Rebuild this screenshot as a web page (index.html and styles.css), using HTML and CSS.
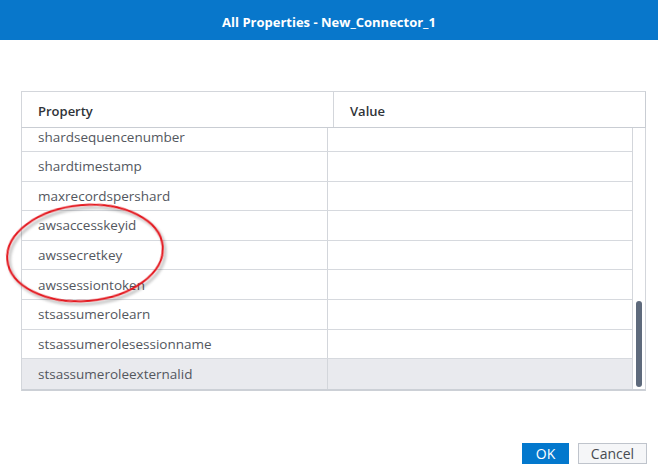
FILE: index.html
```html
<!DOCTYPE html>
<html>
<head>
<meta charset="utf-8">
<link rel="stylesheet" href="styles.css">
</head>
<body>
<div class="dialog">
  <div class="titlebar">All Properties - New_Connector_1</div>
  <div class="content">
    <div class="grid">
      <div class="grid-head">
        <div class="hcell hname">Property</div>
        <div class="hcell hvalue">Value</div>
      </div>
      <div class="grid-body">
        <div class="rows-viewport">
          <div class="rows">
            <div class="row"><div class="cell name">shardsequencenumber</div><div class="cell value"></div></div>
            <div class="row"><div class="cell name">shardtimestamp</div><div class="cell value"></div></div>
            <div class="row"><div class="cell name">maxrecordspershard</div><div class="cell value"></div></div>
            <div class="row"><div class="cell name">awsaccesskeyid</div><div class="cell value"></div></div>
            <div class="row"><div class="cell name">awssecretkey</div><div class="cell value"></div></div>
            <div class="row"><div class="cell name">awssessiontoken</div><div class="cell value"></div></div>
            <div class="row"><div class="cell name">stsassumerolearn</div><div class="cell value"></div></div>
            <div class="row"><div class="cell name">stsassumerolesessionname</div><div class="cell value"></div></div>
            <div class="row selected"><div class="cell name">stsassumeroleexternalid</div><div class="cell value"></div></div>
          </div>
        </div>
        <div class="scrolltrack"><div class="thumb"></div></div>
      </div>
    </div>
    <div class="footer">
      <button class="btn btn-primary">OK</button>
      <button class="btn btn-secondary">Cancel</button>
    </div>
  </div>
  <svg class="annotation" width="185" height="115" viewBox="0 0 185 115">
    <defs>
      <filter id="sh" x="-20%" y="-20%" width="140%" height="140%">
        <feGaussianBlur in="SourceAlpha" stdDeviation="1.5"/>
        <feOffset dx="2" dy="3" result="b"/>
        <feComponentTransfer><feFuncA type="linear" slope="0.35"/></feComponentTransfer>
        <feMerge><feMergeNode/><feMergeNode in="SourceGraphic"/></feMerge>
      </filter>
    </defs>
    <ellipse cx="85" cy="55" rx="78" ry="48" transform="rotate(-5 85 55)" fill="none" stroke="#e3161e" stroke-width="2" filter="url(#sh)"/>
  </svg>
</div>
</body>
</html>
```
FILE: styles.css
```css
html, body {
  margin: 0;
  padding: 0;
  background: #ffffff;
}

body {
  font-family: "Open Sans", "Liberation Sans", sans-serif;
  width: 658px;
  height: 471px;
  overflow: hidden;
}

.dialog {
  position: relative;
  width: 658px;
  height: 471px;
}

.titlebar {
  height: 40px;
  background: #0877cb;
  color: #ffffff;
  font-weight: 700;
  font-size: 13px;
  display: flex;
  align-items: center;
  justify-content: center;
  padding-top: 4px;
  box-sizing: border-box;
}

.content {
  padding: 51px 12px 0 21px;
}

.grid {
  width: 625px;
}

.grid-head {
  display: flex;
  height: 37px;
  box-sizing: border-box;
  border: 1px solid #d3d6db;
  border-right-color: #c9cdd3;
  border-bottom-color: #c9cdd3;
}

.hcell {
  display: flex;
  align-items: center;
  padding-left: 16px;
  padding-top: 3px;
  box-sizing: border-box;
  font-size: 13px;
  font-weight: 600;
  color: #2f3338;
}

.hname {
  width: 312px;
  border-right: 1px solid #d3d6db;
}

.hvalue {
  flex: 1;
}

.grid-body {
  display: flex;
  height: 263px;
  box-sizing: border-box;
  border-left: 1px solid #d3d6db;
  border-right: 1px solid #d3d6db;
  border-bottom: 2px solid #ccd0d6;
}

.rows-viewport {
  width: 611px;
  overflow: hidden;
  border-right: 1px solid #d3d6db;
  box-sizing: border-box;
}

.rows {
  margin-top: -5.6px;
}

.row {
  display: flex;
  height: 29.6px;
  box-sizing: border-box;
  border-bottom: 1px solid #d6d9de;
}

.row.selected {
  background: #e9eaee;
  border-bottom: none;
}

.cell {
  display: flex;
  align-items: center;
  box-sizing: border-box;
  font-size: 13.5px;
  color: #53575e;
}

.name {
  width: 306px;
  padding-left: 16px;
  border-right: 1px solid #d3d6db;
}

.value {
  flex: 1;
}

.scrolltrack {
  flex: 1;
  display: flex;
  flex-direction: column;
  align-items: flex-start;
}

.thumb {
  margin-top: 173px;
  margin-left: 3px;
  width: 6px;
  height: 86px;
  border-radius: 3px;
  background: #5e6a7c;
}

.footer {
  display: flex;
  justify-content: flex-end;
  gap: 9px;
  margin-top: 52px;
  margin-right: -1px;
}

.btn {
  height: 21px;
  box-sizing: border-box;
  font-family: "Open Sans", "Liberation Sans", sans-serif;
  font-size: 14px;
  line-height: 1;
  padding: 0;
  display: flex;
  align-items: center;
  justify-content: center;
}

.btn-primary {
  width: 47px;
  background: #0378cd;
  color: #ffffff;
  border: none;
}

.btn-secondary {
  width: 69px;
  background: #f5f6f8;
  color: #474b52;
  border: 1px solid #bfc4cc;
}

.annotation {
  position: absolute;
  left: 0;
  top: 198px;
  pointer-events: none;
}
```
